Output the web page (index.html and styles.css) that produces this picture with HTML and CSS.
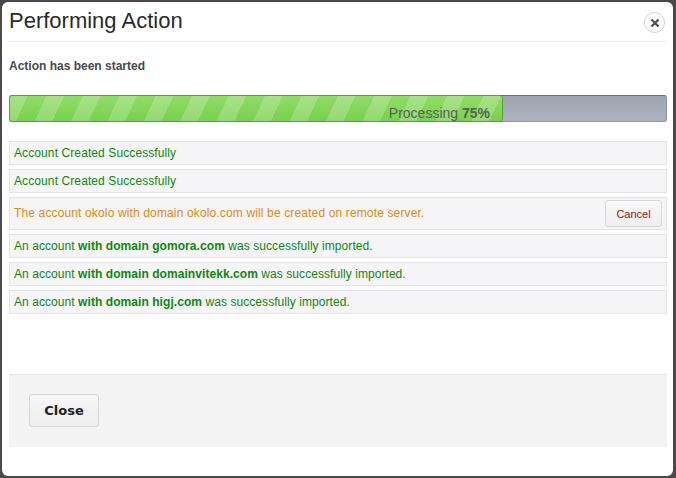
FILE: index.html
```html
<!DOCTYPE html>
<html lang="en">
<head>
    <meta charset="UTF-8">
    <title>Performing Action</title>
    <link rel="stylesheet" href="styles.css">
</head>
<body>
    <div class="dialog">
        <div class="header">
            <h3>Performing Action</h3>
            <button class="close-x" aria-label="Close">
                <svg width="10" height="10" viewBox="0 0 10 10"><path d="M1.5 1.5l7 7M8.5 1.5l-7 7" stroke="#555" stroke-width="2.4" fill="none"/></svg>
            </button>
        </div>
        <p class="status">Action has been started</p>
        <div class="progress">
            <div class="bar"><span class="label">Processing <b>75%</b></span></div>
        </div>
        <ul class="log">
            <li class="ok">Account Created Successfully</li>
            <li class="ok">Account Created Successfully</li>
            <li class="pending"><span class="msg">The account okolo with domain okolo.com will be created on remote server.</span><button class="cancel">Cancel</button></li>
            <li class="ok">An account <b>with domain gomora.com</b> was successfully imported.</li>
            <li class="ok">An account <b>with domain domainvitekk.com</b> was successfully imported.</li>
            <li class="ok">An account <b>with domain higj.com</b> was successfully imported.</li>
        </ul>
        <div class="footer">
            <button class="close-btn">Close</button>
        </div>
    </div>
</body>
</html>
```

FILE: styles.css
```css
html, body {
    height: 100%;
}

body {
    margin: 0;
    padding: 2px 3px 2px 2px;
    box-sizing: border-box;
    background: #4a4848;
    font-family: "Liberation Sans", Arial, sans-serif;
    font-size: 12px;
    overflow: hidden;
}

.dialog {
    height: 100%;
    padding: 0 6px 0 7px;
    box-sizing: border-box;
    background: #fff;
    border-radius: 6px;
}

.header {
    display: flex;
    justify-content: space-between;
    height: 39px;
    border-bottom: 1px solid #eee;
}

.header h3 {
    margin: 0;
    padding-top: 6px;
    font-size: 22px;
    font-weight: normal;
    line-height: 25px;
    color: #2a2a2a;
}

.close-x {
    display: flex;
    align-items: center;
    justify-content: center;
    width: 21px;
    height: 21px;
    margin: 10px 2px 0 0;
    padding: 0;
    border: 1.5px solid #d0d0d0;
    border-radius: 50%;
    background: #fff;
}

.status {
    margin: 17px 0 22px;
    font-weight: bold;
    line-height: 14px;
    color: #484850;
}

.progress {
    height: 27px;
    box-sizing: border-box;
    border: 1px solid #8d93a0;
    border-top-color: #666b78;
    border-radius: 3px;
    background: linear-gradient(#9ea4b0, #aeb3bf);
}

.bar {
    position: relative;
    width: calc(75% + 2px);
    height: 27px;
    margin: -1px 0 0 -1px;
    box-sizing: border-box;
    border: 1px solid #4fa52f;
    border-radius: 3px;
    background-image:
        repeating-linear-gradient(115deg,
            rgba(255, 255, 255, 0.2) 0, rgba(255, 255, 255, 0.2) 16px,
            transparent 16px, transparent 33px),
        linear-gradient(#90dd64, #78d050);
}

.label {
    position: absolute;
    right: 12px;
    top: 9px;
    font-size: 14px;
    line-height: 16px;
    color: #56644f;
}

.log {
    margin: 19px 0 0;
    padding: 0;
    list-style: none;
    letter-spacing: 0.065px;
}

.log li {
    display: flex;
    align-items: center;
    justify-content: space-between;
    min-height: 24px;
    margin-bottom: 4px;
    padding: 0 4px;
    box-sizing: border-box;
    border: 1px solid #e3e3ea;
    background: #f5f5f8;
}

.log li:nth-child(-n+2) {
    letter-spacing: 0.1px;
}

.log li.ok {
    display: block;
    line-height: 22px;
    color: #0a8a0a;
}

.log li.pending {
    min-height: 33px;
    color: #e08a10;
}

.msg {
    padding-bottom: 2px;
    letter-spacing: 0.14px;
}

.cancel {
    width: 57px;
    height: 27px;
    padding: 0;
    border: 1px solid #d6d6d6;
    border-radius: 3px;
    background: linear-gradient(#f8f8f8, #efefef);
    font: 11px "Liberation Sans", Arial, sans-serif;
    color: #a01010;
}

.footer {
    margin-top: 60px;
    height: 73px;
    padding: 19px 20px;
    box-sizing: border-box;
    border-top: 1px solid #e5e5e5;
    background: #f3f3f3;
}

.close-btn {
    width: 70px;
    height: 33px;
    padding: 0;
    border: 1px solid #d6d6d6;
    border-radius: 3px;
    background: linear-gradient(#f6f6f6, #eeeeee);
    font: bold 13px "DejaVu Sans", Verdana, sans-serif;
    color: #222;
}
```
